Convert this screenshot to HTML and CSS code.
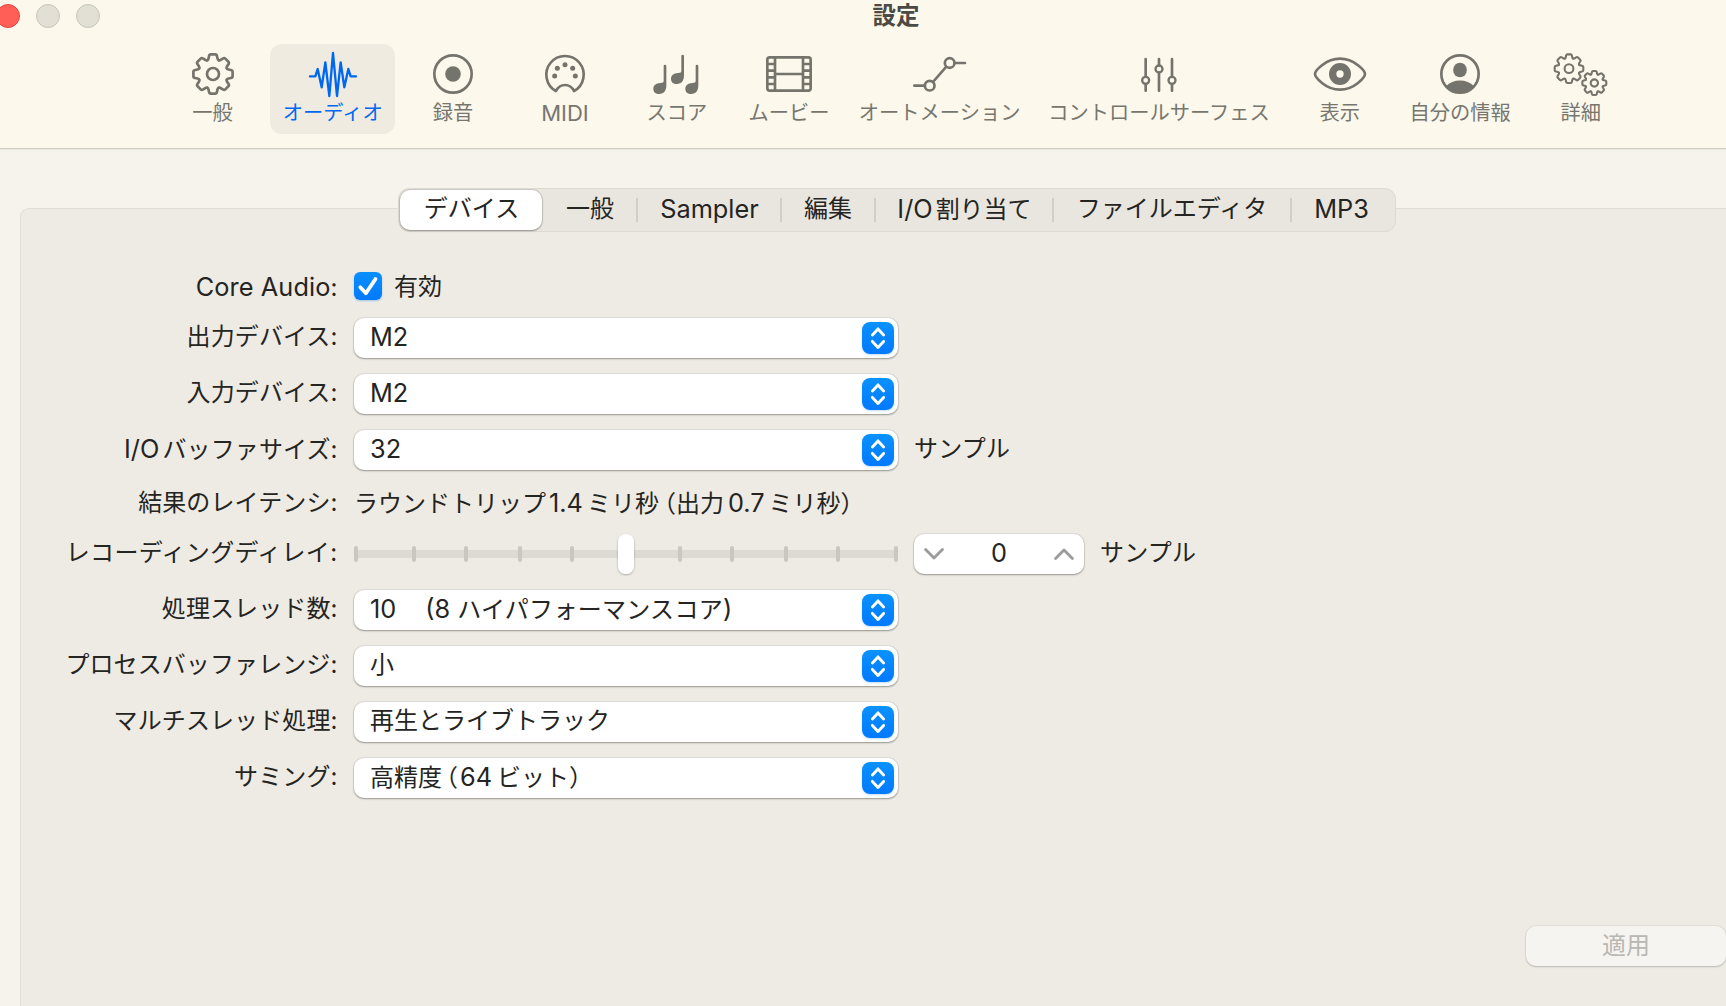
FILE: index.html
```html
<!DOCTYPE html>
<html lang="ja">
<head>
<meta charset="utf-8">
<title>設定</title>
<link rel="stylesheet" href="styles.css">
</head>
<body>
<svg class="defs" aria-hidden="true">
  <defs>
    <path id="tooth" vector-effect="non-scaling-stroke" d="M-17.1-41.4C-14.7-42.4-14-44-13.5-46.2L-12-53.5Q-11-58.8-6.5-58.8H6.5Q11-58.8 12-53.5L13.5-46.2C14-44 14.7-42.4 17.1-41.4"/>
    <g id="gear">
      <use href="#tooth"/><use href="#tooth" transform="rotate(45)"/><use href="#tooth" transform="rotate(90)"/><use href="#tooth" transform="rotate(135)"/><use href="#tooth" transform="rotate(180)"/><use href="#tooth" transform="rotate(225)"/><use href="#tooth" transform="rotate(270)"/><use href="#tooth" transform="rotate(315)"/>
      <circle r="18" vector-effect="non-scaling-stroke"/>
    </g>
    <symbol id="updown" viewBox="0 0 32 32"><path d="M10.4 12.9 16 6.9l5.6 6M10.4 19.4l5.6 6 5.6-6"/></symbol>
  </defs>
</svg>
<header class="header">
  <div class="titlebar">
    <div class="lights"><i class="light light-close"></i><i class="light"></i><i class="light"></i></div>
    <h1 class="title">設定</h1>
  </div>
  <nav class="toolbar">
    <a class="tool"><svg class="icon" viewBox="-81 -72 162 144"><g class="gear"><use href="#gear"/></g></svg><span>一般</span></a>
    <a class="tool tool-active"><svg class="icon" viewBox="-81 -72 162 144"><path class="wave" d="M-69 7H-53L-46-15-34 40-23-35-11 66 0-63 12 66 23-35 34 40 46-15 53 7H69"/></svg><span>オーディオ</span></a>
    <a class="tool"><svg class="icon" viewBox="-81 -72 162 144"><circle r="56"/><circle class="solid" r="23.5"/></svg><span>録音</span></a>
    <a class="tool"><svg class="icon" viewBox="-81 -72 162 144"><path d="M-27 51A56 56 0 1 1 27 51Q18 33 0 33T-27 51Z"/><g class="solid"><circle cx="-31" cy="6" r="7.5"/><circle cx="-23" cy="-17" r="7.5"/><circle cy="-28" r="7.5"/><circle cx="23" cy="-17" r="7.5"/><circle cx="31" cy="6" r="7.5"/></g></svg><span class="midi">MIDI</span></a>
    <a class="tool"><svg class="icon" viewBox="-81 -72 162 144"><g class="solid"><path id="note" d="M-40-24q0-4 4-4t4 4V34C-32 51-40 60-53 60-64 60-71 54-71 45-71 34-63 28-50 27-42 26-40 25-40 20Z"/><use href="#note" x="53" y="-30"/><use href="#note" x="96"/></g></svg><span>スコア</span></a>
    <a class="tool"><svg class="icon" viewBox="-81 -72 162 144"><rect x="-65" y="-50" width="130" height="100" rx="7"/><path d="M-42-50V50M42-50V50M-42 0H42M-65-30H-42M-65-10H-42M-65 10H-42M-65 30H-42M65-30H42M65-10H42M65 10H42M65 30H42"/></svg><span>ムービー</span></a>
    <a class="tool"><svg class="icon" viewBox="-81 -72 162 144"><path d="M-77 35H-45M-21 24 19-22M43-33H75"/><circle cx="-31" cy="35" r="14.5"/><circle cx="29" cy="-33" r="14.5"/></svg><span>オートメーション</span></a>
    <a class="tool"><svg class="icon" viewBox="-81 -72 162 144"><path d="M-40-45V8M-40 30V50M0-45V-26M0-4V50M39-45V8M39 30V50"/><g class="knobs"><circle cx="-40" cy="19" r="10.5"/><circle cy="-15" r="10.5"/><circle cx="39" cy="19" r="10.5"/></g></svg><span>コントロールサーフェス</span></a>
    <a class="tool"><svg class="icon" viewBox="-81 -72 162 144"><path d="M-75 0C-75-9-44-46 0-46S75-9 75 0 44 47 0 47-75 9-75 0Z"/><circle r="22" class="iris"/></svg><span>表示</span></a>
    <a class="tool"><svg class="icon" viewBox="-81 -72 162 144"><circle r="56"/><g class="solid"><ellipse cy="-12" rx="20.5" ry="22"/><path d="M-42 37C-22 14 22 14 42 37A56 56 0 0 1-42 37Z"/></g></svg><span>自分の情報</span></a>
    <a class="tool"><svg class="icon" viewBox="-81 -72 162 144"><g class="gears"><use href="#gear" transform="translate(-36 -16) scale(.73)"/><use href="#gear" transform="translate(40 27) scale(.61)"/></g></svg><span>詳細</span></a>
  </nav>
</header>
<main class="content">
  <nav class="segments">
    <a class="seg seg-device seg-on">デバイス</a>
    <a class="seg seg-general">一般</a>
    <a class="seg seg-sampler"><span class="lat">Sampler</span></a>
    <a class="seg seg-edit">編集</a>
    <a class="seg seg-io"><span><span class="lat io">I/O</span>割り当て</span></a>
    <a class="seg seg-file">ファイルエディタ</a>
    <a class="seg seg-mp3"><span class="lat">MP3</span></a>
  </nav>
  <section class="panel">
    <div class="form">
      <div class="row row-check"><label class="label"><span class="lat">Core Audio</span>:</label>
        <span class="check"><svg viewBox="0 0 28 28"><path d="M6.3 15.2 11.9 21.2 21.5 7"/></svg></span><span class="check-text">有効</span></div>
      <div class="row"><label class="label">出力デバイス:</label><div class="popup"><span class="lat">M2</span><svg class="arrows"><use href="#updown"/></svg></div></div>
      <div class="row"><label class="label">入力デバイス:</label><div class="popup"><span class="lat">M2</span><svg class="arrows"><use href="#updown"/></svg></div></div>
      <div class="row"><label class="label"><span class="lat io">I/O</span>バッファサイズ:</label><div class="popup"><span class="lat">32</span><svg class="arrows"><use href="#updown"/></svg></div><span class="unit">サンプル</span></div>
      <div class="row row-latency"><label class="label">結果のレイテンシ:</label><span class="latency">ラウンドトリップ<span class="lat trip">1.4</span>ミリ秒<span class="half">（</span>出力<span class="lat out">0.7</span>ミリ秒<span class="half close">）</span></span></div>
      <div class="row"><label class="label wide">レコーディングディレイ:</label>
        <svg class="slider" viewBox="0 0 544 44"><defs><filter id="shade" x="-50%" y="-20%" width="200%" height="150%"><feDropShadow dx="0" dy="1" stdDeviation="1" flood-opacity=".3"/></filter></defs>
          <rect class="track" x="2" y="18" width="540" height="8" rx="2"/>
          <path class="ticks" d="M2 16V28M60 16V28M112 16V28M166 16V28M218 16V28M326 16V28M378 16V28M432 16V28M484 16V28M542 16V28"/>
          <rect class="thumb" x="264" y="2" width="16" height="40" rx="8"/></svg>
        <div class="stepper"><svg viewBox="0 0 20 12"><path d="M1.6 1.6 10 10l8.4-8.4"/></svg><span class="lat">0</span><svg viewBox="0 0 20 12"><path d="M1.6 10.4 10 2l8.4 8.4"/></svg></div><span class="unit">サンプル</span></div>
      <div class="row"><label class="label">処理スレッド数:</label><div class="popup"><span><span class="lat ten">10</span><span class="lat eight">(8</span><span class="cores">ハイパフォーマンスコア</span><span class="lat">)</span></span><svg class="arrows"><use href="#updown"/></svg></div></div>
      <div class="row"><label class="label">プロセスバッファレンジ:</label><div class="popup">小<svg class="arrows"><use href="#updown"/></svg></div></div>
      <div class="row"><label class="label">マルチスレッド処理:</label><div class="popup">再生とライブトラック<svg class="arrows"><use href="#updown"/></svg></div></div>
      <div class="row"><label class="label">サミング:</label><div class="popup"><span>高精度<span class="half precision">（</span><span class="lat bits">64</span>ビット<span class="half close">）</span></span><svg class="arrows"><use href="#updown"/></svg></div></div>
    </div>
    <button class="apply" disabled>適用</button>
  </section>
</main>
</body>
</html>
```
FILE: styles.css
```css
* { box-sizing: border-box; }
body {
  margin: 0;
  height: 1006px;
  overflow: hidden;
  background: #f5f3eb;
  color: #242422;
  font: 24px/40px Inter, "Noto Sans CJK JP", sans-serif;
  white-space: nowrap;
}
.defs { display: block; width: 0; height: 0; }
.lat { font-size: 25.3px; }

/* Title bar and toolbar */
.header {
  height: 149px;
  background: #fcf8ec;
  border-bottom: 1px solid #cfccc4;
  box-shadow: 0 1px 0 #eae7df;
}
.titlebar { display: grid; grid-template-columns: 872.5px auto; height: 44px; }
.lights { display: flex; gap: 16px; margin-left: -4px; padding-top: 4px; }
.light { width: 24px; height: 24px; border-radius: 50%; background: #e2dfd4; border: 1px solid #c9c6bb; flex: none; }
.light-close { background: #ff5f57; border-color: #e2463f; }
.title { margin: 0; font-size: 23.5px; font-weight: 700; line-height: 32px; color: #4b4a44; }
.toolbar { display: flex; gap: 3px; padding-left: 158px; }
.tool {
  display: flex;
  flex-direction: column;
  align-items: center;
  min-width: 109px;
  height: 90px;
  padding: 6px 12.4px 0;
  border-radius: 12px;
  font-size: 20.25px;
  line-height: 24px;
  color: #77766e;
}
.tool span { margin-top: 3px; }
.tool .midi { font-size: 22px; }
.tool-active { padding: 6px 12.8px 0; background: #efebe1; color: #0068f0; }
.icon {
  width: 54px;
  height: 48px;
  overflow: visible;
  fill: none;
  stroke: #75746c;
  stroke-width: 8;
  stroke-linecap: round;
  stroke-linejoin: round;
}
.icon .solid { fill: #75746c; stroke: none; }
.icon .wave { stroke: #0068f0; stroke-width: 7; }
.gear { stroke-width: 2.7px; }
.gears { stroke-width: 2.1px; }
.knobs { stroke-width: 7; }
.iris { stroke-width: 22; }

/* Tabs over the panel edge */
.content { position: relative; padding: 59px 0 0 20px; }
.segments {
  position: absolute;
  left: 398px;
  top: 39px;
  display: flex;
  width: 998px;
  height: 44px;
  padding: 1px;
  border: 1px solid #dddad3;
  border-radius: 11px;
  background: #e9e6df;
}
.seg { display: flex; justify-content: center; height: 40px; line-height: 38px; }
.seg:not(.seg-on):not(:last-child) { border-right: 2px solid #d1cfc9; height: 24px; margin-top: 8px; line-height: 22px; }
.seg-on { background: #fff; border-radius: 10px; box-shadow: 0 0 0 1px #0000001c, 0 1px 2px #00000048; }
.seg-device { width: 142px; padding-left: 1px; }
.seg-general { width: 96px; padding-left: 2px; }
.seg-sampler { width: 144px; padding-left: 1px; }
.seg-edit { width: 94px; }
.seg-io { width: 178px; padding-left: 1px; }
.seg-file { width: 238px; }
.seg-mp3 { width: 100px; padding-right: 1px; }

.panel {
  height: 810px;
  border: 1px solid #e0ddd6;
  border-right: 0;
  border-radius: 9px 0 0 0;
  background: #eeebe4;
  padding-top: 57px;
}
.form { display: flex; flex-direction: column; gap: 16px; }
.row { display: flex; height: 40px; }
.row-check { height: 36px; }
.row-latency { margin: 0 0 -8px; }
.label { width: 316.5px; margin-right: 16.5px; text-align: right; line-height: 38px; letter-spacing: .1px; }
.label.wide { letter-spacing: .35px; }
.row-check .label, .check-text { line-height: 42px; }
.row-latency .label, .latency { line-height: 34px; }
.check { width: 28px; height: 28px; margin-top: 6px; border-radius: 6px; background: linear-gradient(#0a8fff, #007aff); box-shadow: 0 1px 2px #007aff55; }
.check svg { display: block; fill: none; stroke: #fff; stroke-width: 3.8; stroke-linecap: round; stroke-linejoin: round; }
.check-text { margin-left: 12px; }
.popup, .stepper {
  display: flex;
  justify-content: space-between;
  border-radius: 10px;
  background: #fff;
  line-height: 38px;
  box-shadow: 0 0 0 1px #0000000f, 0 1px 2px #00000055;
}
.popup { width: 544px; padding: 0 4px 0 16px; }
.arrows {
  width: 32px;
  height: 32px;
  margin-top: 4px;
  border-radius: 8px;
  background: linear-gradient(#0a92ff, #0079ff);
  box-shadow: 0 1px 2px #007aff40;
  fill: none;
  stroke: #fff;
  stroke-width: 2.9;
  stroke-linecap: round;
  stroke-linejoin: round;
}
.unit { margin-left: 16px; line-height: 38px; letter-spacing: .2px; }
.trip { margin: 0 4px 0 3px; }
.out { margin: 0 4px 0 4px; }
.half { font-feature-settings: "halt"; margin: 0 0 0 5px; }
.half.precision { margin: 0 2px 0 4px; }
.half.close { margin: 0; }
.io { margin-right: 3px; }
.ten { margin-right: 29px; }
.eight { margin-right: 7px; }
.cores { letter-spacing: .3px; }
.bits { margin-right: 5px; }

.slider { width: 544px; height: 44px; margin-top: -2px; }
.track { fill: #dddad4; }
.ticks { stroke: #c9c7c1; stroke-width: 4; stroke-linecap: round; }
.thumb { fill: #fff; filter: url(#shade); }
.stepper { width: 170px; margin-left: 16px; padding: 0 10px; }
.stepper svg { width: 20px; height: 12px; margin-top: 14px; fill: none; stroke: #9b9b9b; stroke-width: 2.8; stroke-linecap: round; stroke-linejoin: round; }
.apply {
  display: block;
  width: 200px;
  height: 40px;
  margin: 128px 0 0 auto;
  padding: 0;
  border: 0;
  border-radius: 10px;
  background: #f6f4f0;
  color: #b9b7b3;
  font: inherit;
  line-height: 38px;
  box-shadow: 0 0 0 1px #0000000a, 0 1px 2px #00000030;
}
```
